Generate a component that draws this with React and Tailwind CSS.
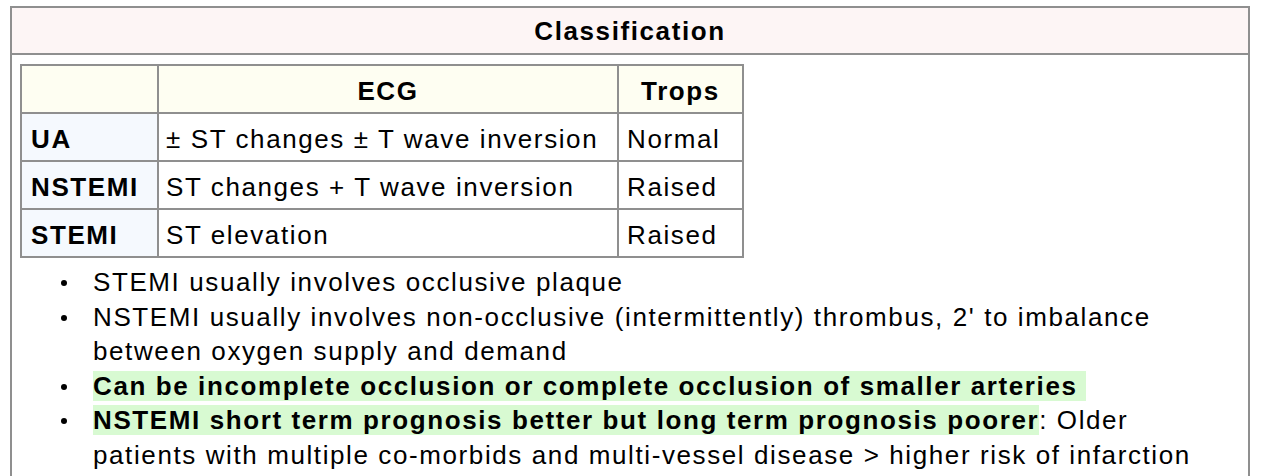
import React from 'react';

const rows = [
  { name: 'UA', ecg: '± ST changes ± T wave inversion', trops: 'Normal' },
  { name: 'NSTEMI', ecg: 'ST changes + T wave inversion', trops: 'Raised' },
  { name: 'STEMI', ecg: 'ST elevation', trops: 'Raised' },
];

function Bullet({ children }) {
  return (
    <li className="flex">
      <span className="w-[73px] shrink-0 flex justify-end pr-[26px] pt-[15px]">
        <span className="block w-[6px] h-[6px] rounded-full bg-black"></span>
      </span>
      <span className="w-[1110px]">{children}</span>
    </li>
  );
}

function App() {
  return (
    <div className="bg-white w-[1262px] h-[476px] overflow-hidden pt-[6px] pl-[10px] text-black font-['Liberation_Sans',Arial,sans-serif] text-[26px] tracking-[1.6px]">
      <div className="w-[1240px] border-2 border-[#8f8f8f] h-[500px]">
        {/* Title */}
        <div className="h-[47px] bg-[#fdf5f5] border-b-2 border-[#8f8f8f] flex items-center justify-center font-bold pt-[2px]">
          Classification
        </div>

        <div className="pt-[9px] pl-[8px]">
          <table className="table-fixed border-collapse border-2 border-[#8f8f8f] leading-[30px]">
            <thead>
              <tr className="h-[48px] bg-[#fefef2]">
                <th className="w-[137px] border-2 border-[#8f8f8f]"></th>
                <th className="w-[460px] border-2 border-[#8f8f8f] font-bold text-center pt-[3px]">ECG</th>
                <th className="w-[125px] border-2 border-[#8f8f8f] font-bold text-center pt-[3px]">Trops</th>
              </tr>
            </thead>
            <tbody>
              {rows.map((r) => (
                <tr key={r.name} className="h-[48px]">
                  <td className="bg-[#f5f9fe] border-2 border-[#8f8f8f] px-[9px] pt-[3px] font-bold">{r.name}</td>
                  <td className="border-2 border-[#8f8f8f] px-[7px] pt-[3px] whitespace-nowrap">{r.ecg}</td>
                  <td className="border-2 border-[#8f8f8f] px-[8px] pt-[3px]">{r.trops}</td>
                </tr>
              ))}
            </tbody>
          </table>

          <ul className="mt-[7px] leading-[34.6px]">
            <Bullet>STEMI usually involves occlusive plaque</Bullet>
            <Bullet>
              NSTEMI usually involves non-occlusive (intermittently) thrombus, 2' to imbalance between oxygen supply and demand
            </Bullet>
            <Bullet>
              <span className="bg-[#d8fad2] font-bold">Can be incomplete occlusion or complete occlusion of smaller arteries&nbsp;</span>
            </Bullet>
            <Bullet>
              <span className="bg-[#d8fad2] font-bold">NSTEMI short term prognosis better but long term prognosis poorer</span>: Older patients with multiple co-morbids and multi-vessel disease &gt; higher risk of infarction
            </Bullet>
          </ul>
        </div>
      </div>
    </div>
  );
}

export default App;
